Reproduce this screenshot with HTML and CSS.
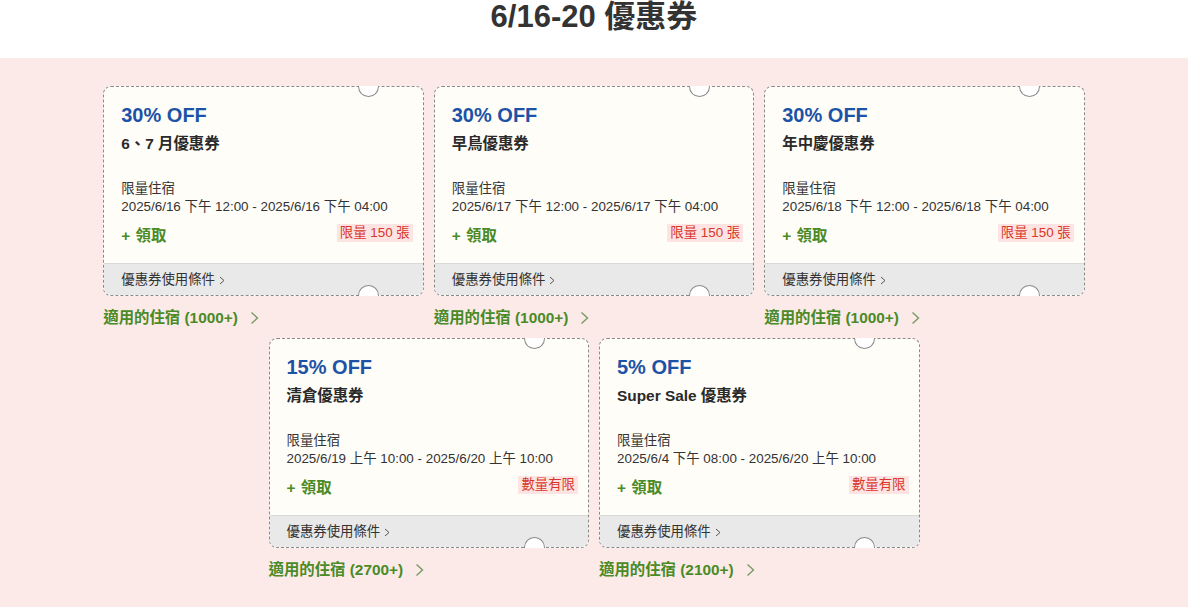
FILE: index.html
```html
<!DOCTYPE html>
<html lang="zh-Hant">
<head>
<meta charset="utf-8">
<title>6/16-20 優惠券</title>
<link rel="stylesheet" href="styles.css">
</head>
<body>
<header class="page-head">
  <h1 class="page-title">6/16-20 優惠券</h1>
</header>
<section class="coupon-area">
  <div class="coupon-list">

    <div class="coupon-item">
      <div class="coupon">
        <span class="notch notch-top"></span>
        <div class="coupon-body">
          <div class="discount">30% OFF</div>
          <div class="coupon-name">6、7 月優惠券</div>
          <div class="meta">限量住宿</div>
          <div class="meta">2025/6/16 下午 12:00 - 2025/6/16 下午 04:00</div>
          <div class="action-row">
            <span class="claim">+ 領取</span>
            <span class="badge">限量 150 張</span>
          </div>
        </div>
        <div class="coupon-foot">優惠券使用條件 <svg class="small-chev" width="6" height="9" viewBox="0 0 6 9"><polyline points="1,1 5,4.5 1,8" fill="none" stroke="#555" stroke-width="1"/></svg></div>
        <span class="notch notch-bottom"></span>
      </div>
      <a class="stay-link">適用的住宿 (1000+) <svg class="link-chev" width="9" height="14" viewBox="0 0 9 14"><polyline points="1.5,1.5 7.5,7 1.5,12.5" fill="none" stroke="#7a9a64" stroke-width="1.4"/></svg></a>
    </div>

    <div class="coupon-item">
      <div class="coupon">
        <span class="notch notch-top"></span>
        <div class="coupon-body">
          <div class="discount">30% OFF</div>
          <div class="coupon-name">早鳥優惠券</div>
          <div class="meta">限量住宿</div>
          <div class="meta">2025/6/17 下午 12:00 - 2025/6/17 下午 04:00</div>
          <div class="action-row">
            <span class="claim">+ 領取</span>
            <span class="badge">限量 150 張</span>
          </div>
        </div>
        <div class="coupon-foot">優惠券使用條件 <svg class="small-chev" width="6" height="9" viewBox="0 0 6 9"><polyline points="1,1 5,4.5 1,8" fill="none" stroke="#555" stroke-width="1"/></svg></div>
        <span class="notch notch-bottom"></span>
      </div>
      <a class="stay-link">適用的住宿 (1000+) <svg class="link-chev" width="9" height="14" viewBox="0 0 9 14"><polyline points="1.5,1.5 7.5,7 1.5,12.5" fill="none" stroke="#7a9a64" stroke-width="1.4"/></svg></a>
    </div>

    <div class="coupon-item">
      <div class="coupon">
        <span class="notch notch-top"></span>
        <div class="coupon-body">
          <div class="discount">30% OFF</div>
          <div class="coupon-name">年中慶優惠券</div>
          <div class="meta">限量住宿</div>
          <div class="meta">2025/6/18 下午 12:00 - 2025/6/18 下午 04:00</div>
          <div class="action-row">
            <span class="claim">+ 領取</span>
            <span class="badge">限量 150 張</span>
          </div>
        </div>
        <div class="coupon-foot">優惠券使用條件 <svg class="small-chev" width="6" height="9" viewBox="0 0 6 9"><polyline points="1,1 5,4.5 1,8" fill="none" stroke="#555" stroke-width="1"/></svg></div>
        <span class="notch notch-bottom"></span>
      </div>
      <a class="stay-link">適用的住宿 (1000+) <svg class="link-chev" width="9" height="14" viewBox="0 0 9 14"><polyline points="1.5,1.5 7.5,7 1.5,12.5" fill="none" stroke="#7a9a64" stroke-width="1.4"/></svg></a>
    </div>

    <div class="coupon-item">
      <div class="coupon">
        <span class="notch notch-top"></span>
        <div class="coupon-body">
          <div class="discount">15% OFF</div>
          <div class="coupon-name">清倉優惠券</div>
          <div class="meta">限量住宿</div>
          <div class="meta">2025/6/19 上午 10:00 - 2025/6/20 上午 10:00</div>
          <div class="action-row">
            <span class="claim">+ 領取</span>
            <span class="badge">數量有限</span>
          </div>
        </div>
        <div class="coupon-foot">優惠券使用條件 <svg class="small-chev" width="6" height="9" viewBox="0 0 6 9"><polyline points="1,1 5,4.5 1,8" fill="none" stroke="#555" stroke-width="1"/></svg></div>
        <span class="notch notch-bottom"></span>
      </div>
      <a class="stay-link">適用的住宿 (2700+) <svg class="link-chev" width="9" height="14" viewBox="0 0 9 14"><polyline points="1.5,1.5 7.5,7 1.5,12.5" fill="none" stroke="#7a9a64" stroke-width="1.4"/></svg></a>
    </div>

    <div class="coupon-item">
      <div class="coupon">
        <span class="notch notch-top"></span>
        <div class="coupon-body">
          <div class="discount">5% OFF</div>
          <div class="coupon-name">Super Sale 優惠券</div>
          <div class="meta">限量住宿</div>
          <div class="meta">2025/6/4 下午 08:00 - 2025/6/20 上午 10:00</div>
          <div class="action-row">
            <span class="claim">+ 領取</span>
            <span class="badge">數量有限</span>
          </div>
        </div>
        <div class="coupon-foot">優惠券使用條件 <svg class="small-chev" width="6" height="9" viewBox="0 0 6 9"><polyline points="1,1 5,4.5 1,8" fill="none" stroke="#555" stroke-width="1"/></svg></div>
        <span class="notch notch-bottom"></span>
      </div>
      <a class="stay-link">適用的住宿 (2100+) <svg class="link-chev" width="9" height="14" viewBox="0 0 9 14"><polyline points="1.5,1.5 7.5,7 1.5,12.5" fill="none" stroke="#7a9a64" stroke-width="1.4"/></svg></a>
    </div>

  </div>
</section>
</body>
</html>
```

FILE: styles.css
```css
* { box-sizing: border-box; }

html, body {
  margin: 0;
  padding: 0;
  background: #ffffff;
  font-family: "Liberation Sans", "Noto Sans CJK TC", sans-serif;
  color: #333333;
}

.page-head {
  width: 1188px;
  height: 58px;
  display: flex;
  justify-content: center;
}

.page-title {
  margin: 0;
  font-size: 31px;
  line-height: 33px;
  font-weight: 700;
  color: #333333;
}

.coupon-area {
  width: 1188px;
  background: #fbeae8;
  padding: 28px 0 17px;
  display: flex;
  justify-content: center;
}

.coupon-list {
  width: 982px;
  display: flex;
  flex-wrap: wrap;
  justify-content: center;
  column-gap: 10px;
}

.coupon-item {
  width: 320.5px;
  display: flex;
  flex-direction: column;
}

.coupon {
  position: relative;
  height: 210px;
  background: #fffdf8;
  border: 1px dashed #8a8a8a;
  border-radius: 8px;
  display: flex;
  flex-direction: column;
}

.coupon-body {
  flex: 1;
  padding: 16px 10px 0 17px;
}

.discount {
  font-size: 20px;
  line-height: 24px;
  font-weight: 700;
  color: #1c53a6;
}

.coupon-name {
  margin-top: 7px;
  margin-bottom: 26px;
  font-size: 15.4px;
  line-height: 20px;
  font-weight: 700;
  color: #2a2a2a;
}

.meta {
  font-size: 13.4px;
  line-height: 18px;
  color: #333333;
}

.action-row {
  margin-top: 7px;
  display: flex;
  justify-content: space-between;
  align-items: flex-start;
}

.claim {
  font-size: 15.4px;
  line-height: 26px;
  font-weight: 700;
  color: #4a8a27;
  word-spacing: 1px;
}

.badge {
  margin-top: 1px;
  padding: 0 3px;
  height: 18px;
  font-size: 13.4px;
  line-height: 18px;
  color: #d8362a;
  background: #fde4e2;
}

.coupon-foot {
  height: 32px;
  padding-left: 17px;
  background: #e9e9e9;
  border-top: 1px solid #d9d9d9;
  border-radius: 0 0 7px 7px;
  font-size: 13.4px;
  line-height: 30px;
  color: #333333;
  display: flex;
  align-items: center;
  gap: 4px;
  padding-top: 1px;
}

.small-chev { display: block; margin-top: 1px; }

.notch {
  position: absolute;
  left: 254px;
  width: 21px;
  height: 11px;
  background: #ffffff;
  border: 1px solid #8a8a8a;
}

.notch-top {
  top: -1px;
  border-top: none;
  border-radius: 0 0 11px 11px;
}

.notch-bottom {
  bottom: -1px;
  border-bottom: none;
  border-radius: 11px 11px 0 0;
}

.stay-link {
  padding: 12px 0 10px;
  font-size: 15.4px;
  line-height: 20px;
  font-weight: 700;
  color: #4a8a27;
  display: flex;
  align-items: center;
  gap: 12px;
}

.link-chev { display: block; }
```
